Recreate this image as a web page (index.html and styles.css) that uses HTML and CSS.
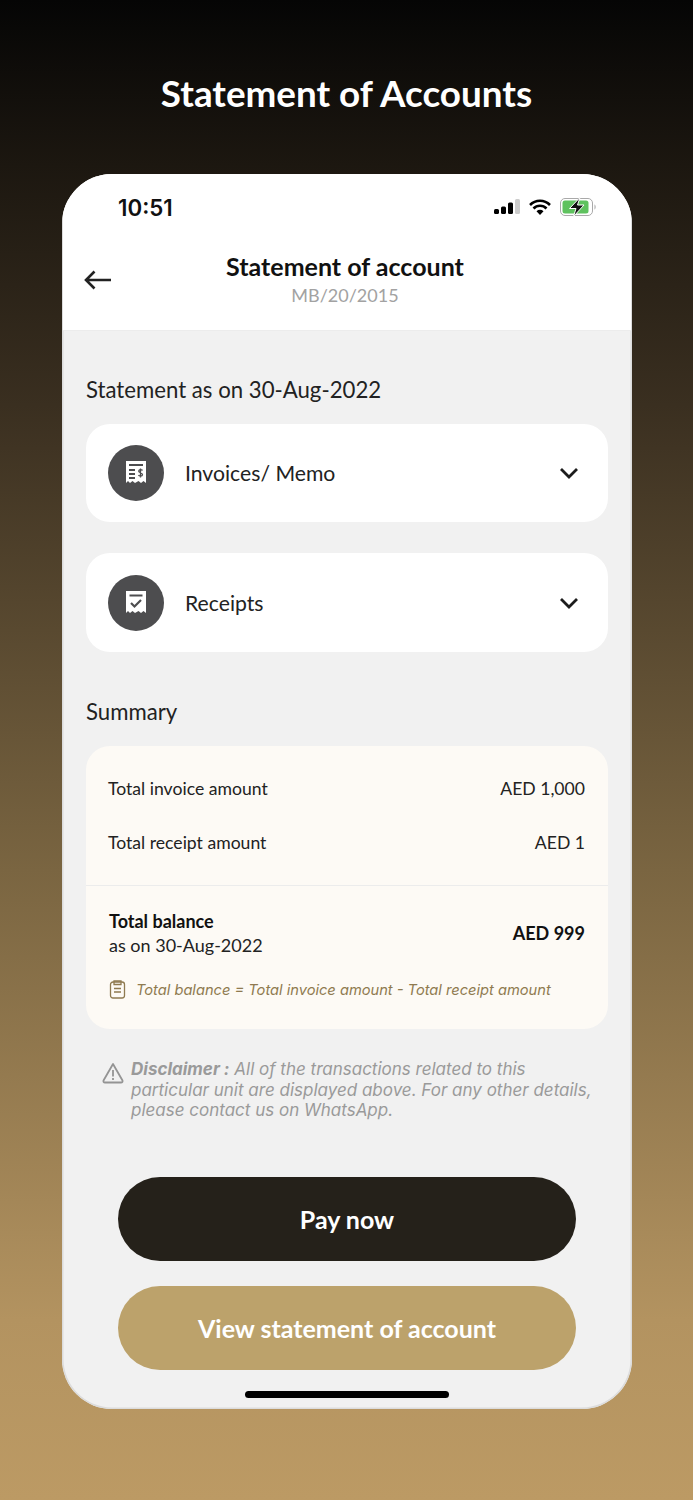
FILE: index.html
```html
<!DOCTYPE html>
<html>
<head>
    <meta charset="UTF-8">
    <meta name="viewport" content="width=device-width, initial-scale=1.0">
    <title>Statement of Accounts</title>
    <link rel="stylesheet" href="styles.css">
</head>
<body>
    <h1 class="page-title">Statement of Accounts</h1>

    <div class="phone">
        <div class="top">
            <div class="status-bar">
                <span class="time">10:51</span>
                <div class="status-icons">
                    <svg width="26" height="16" viewBox="0 0 26 16">
                        <rect x="0" y="10" width="5" height="5" rx="1.5" fill="#000"/>
                        <rect x="7" y="7.5" width="5" height="7.5" rx="1.5" fill="#000"/>
                        <rect x="14" y="3.5" width="5" height="11.5" rx="1.5" fill="#000"/>
                        <rect x="21" y="0" width="5" height="15" rx="1.5" fill="#ccc"/>
                    </svg>
                    <svg width="24" height="17" viewBox="0 0 24 17">
                        <path d="M2 6a14 14 0 0 1 20 0M5.500 9.500a9 9 0 0 1 13 0" fill="none" stroke="#000" stroke-width="2.600"/>
                        <path d="M8.500 12.300a5 5 0 0 1 7 0L12 16z" fill="#000"/>
                    </svg>
                    <svg width="37" height="20" viewBox="0 0 37 20">
                        <rect x="0.500" y="1.500" width="32" height="17" rx="4.500" fill="none" stroke="#a9a9a9"/>
                        <rect x="2.500" y="3.500" width="26" height="13" rx="2.500" fill="#5fc25f"/>
                        <path d="M34.500 7.500c1.500.5 1.500 4.500 0 5z" fill="#a9a9a9"/>
                        <path d="M20 0.500 9.500 11.500h6.500l-2.500 8 10.500-11.500h-6.500z" fill="#111" stroke="#fff" stroke-width="1"/>
                    </svg>
                </div>
            </div>
            <div class="nav">
                <svg class="back" width="28" height="20" viewBox="0 0 28 20">
                    <path d="M27 10H2M10.500 1.500 2 10l8.500 8.500" fill="none" stroke="#222" stroke-width="2.600"/>
                </svg>
                <div class="nav-title">Statement of account</div>
                <div class="nav-sub">MB/20/2015</div>
            </div>
        </div>

        <div class="content">
            <h2 class="section">Statement as on 30-Aug-2022</h2>

            <div class="row-card">
                <div class="circle">
                    <svg width="22" height="26" viewBox="0 0 22 24">
                        <path d="M1 0h20v22l-2.500-2-2.500 2-2.500-2-3.500 2-2.500-2-2.500 2L3 20l-2 2z" fill="#fff"/>
                        <path d="M4 4h14" stroke="#4d4d4f" stroke-width="2"/>
                        <path d="M4 9h6M4 13h6M4 17h6" stroke="#4d4d4f" stroke-width="1.800"/>
                        <path d="M17.500 9.500c-.5-1-3.500-1.300-3.800.5-.3 2 4 1.500 3.800 3.700-.2 1.800-3.500 1.500-4 .3M15.500 7.500v9" fill="none" stroke="#4d4d4f" stroke-width="1.300"/>
                    </svg>
                </div>
                <span class="row-label">Invoices/ Memo</span>
                <svg width="20" height="12" viewBox="0 0 20 12">
                    <path d="M2 2l8 8 8-8" fill="none" stroke="#1c1c1c" stroke-width="2.800"/>
                </svg>
            </div>

            <div class="row-card">
                <div class="circle">
                    <svg width="22" height="26" viewBox="0 0 22 24">
                        <path d="M1 0h20v22l-2.500-2-2.500 2-2.500-2-3.500 2-2.500-2-2.500 2L3 20l-2 2z" fill="#fff"/>
                        <path d="M4.500 4.500h13" stroke="#4d4d4f" stroke-width="2"/>
                        <path d="M6 12l3.500 3.500L16 9" fill="none" stroke="#4d4d4f" stroke-width="2.200"/>
                    </svg>
                </div>
                <span class="row-label">Receipts</span>
                <svg width="20" height="12" viewBox="0 0 20 12">
                    <path d="M2 2l8 8 8-8" fill="none" stroke="#1c1c1c" stroke-width="2.800"/>
                </svg>
            </div>

            <h2 class="section">Summary</h2>

            <div class="summary">
                <div class="summary-top">
                    <div class="line"><span>Total invoice amount</span><span>AED 1,000</span></div>
                    <div class="line"><span>Total receipt amount</span><span>AED 1</span></div>
                </div>
                <div class="summary-bottom">
                    <div class="balance">
                        <div><b>Total balance</b><br>as on 30-Aug-2022</div>
                        <b>AED 999</b>
                    </div>
                    <div class="formula">
                        <svg width="17" height="19" viewBox="0 0 17 19">
                            <rect x="1.500" y="2" width="14" height="16" rx="2.500" fill="none" stroke="#8f7a50" stroke-width="1.300"/>
                            <path d="M5 1h7v3.500H5zM5 8.500h7M5 12h7" fill="none" stroke="#8f7a50" stroke-width="1.300"/>
                        </svg>
                        <span>Total balance = Total invoice amount - Total receipt amount</span>
                    </div>
                </div>
            </div>

            <div class="disclaimer">
                <svg width="22" height="22" viewBox="0 0 22 22">
                    <path d="M11 2 1.500 18.500q-.5 2 1.500 2h16q2 0 1.500-2z" fill="none" stroke="#949494" stroke-width="1.800" stroke-linejoin="round"/>
                    <path d="M11 8v6.500M11 16v2" stroke="#949494" stroke-width="1.800"/>
                </svg>
                <p><b>Disclaimer :</b> All of the transactions related to this particular unit are displayed above. For any other details, please contact us on WhatsApp.</p>
            </div>

            <div class="buttons">
                <button class="btn btn-dark">Pay now</button>
                <button class="btn btn-gold">View statement of account</button>
            </div>
            <div class="home-bar"></div>
        </div>
    </div>
</body>
</html>
```

FILE: styles.css
```css
body {
    margin: 0;
    height: 1500px;
    overflow: hidden;
    background: linear-gradient(180deg, #050505 0%, #1c1710 11%, #3a2f20 27%, #7a6541 58%, #b39360 88%, #bc9a64 100%);
    font-family: Lato, sans-serif;
    color: #1c1c1c;
}

.page-title {
    margin: 0;
    padding-top: 72px;
    height: 174px;
    box-sizing: border-box;
    text-align: center;
    color: #fff;
    font-size: 36.800px;
    line-height: 43px;
    font-weight: 700;
}

.phone {
    width: 570px;
    height: 1235px;
    margin-left: 62px;
    border-radius: 50px;
    overflow: hidden;
    background: #f1f1f1;
    box-shadow: inset 0 0 0 1.500px #dcdcdc;
}

.top {
    height: 157px;
    background: #fff;
    border-bottom: 1px solid #ececec;
    box-sizing: border-box;
    margin: 0 1px;
}

.status-bar {
    display: flex;
    justify-content: space-between;
    align-items: center;
    height: 30px;
    padding: 18px 34px 0 55px;
}

.time {
    font-family: Inter, sans-serif;
    font-size: 22.300px;
    font-weight: 600;
    color: #111;
}

.status-icons {
    display: flex;
    align-items: center;
    gap: 8px;
}

.nav {
    position: relative;
    text-align: center;
    padding-top: 29px;
    padding-right: 4px;
}

.back {
    position: absolute;
    left: 21px;
    top: 48px;
}

.nav-title {
    font-size: 25px;
    line-height: 30px;
    font-weight: 700;
    color: #111;
}

.nav-sub {
    font-size: 18px;
    line-height: 29px;
    color: #a2a2a2;
}

.content {
    padding: 0 24px;
}

.section {
    margin: 0;
    padding-top: 45px;
    font-size: 22.200px;
    line-height: 30px;
    font-weight: 400;
    color: #222;
}

.section:first-child {
    padding-top: 44px;
}

.row-card {
    display: flex;
    align-items: center;
    height: 98px;
    margin-top: 19px;
    padding: 0 29px 0 22px;
    background: #fff;
    border-radius: 24px;
}

.row-card + .row-card {
    height: 99px;
    margin-top: 31px;
}

.circle {
    display: flex;
    align-items: center;
    justify-content: center;
    width: 56px;
    height: 56px;
    border-radius: 50%;
    background: #4d4d4f;
}

.row-label {
    flex: 1;
    margin-left: 21px;
    font-size: 21.200px;
    color: #222;
}

.summary {
    margin-top: 19px;
    height: 283px;
    background: #fdfaf5;
    border-radius: 24px;
}

.summary-top {
    height: 140px;
    padding: 16px 23px 0 22px;
    box-sizing: border-box;
    border-bottom: 1px solid #ececec;
}

.line {
    display: flex;
    justify-content: space-between;
    height: 54px;
    line-height: 54px;
    font-size: 17.600px;
    color: #222;
}

.summary-bottom {
    padding: 23px 23px 0 23px;
}

.balance {
    display: flex;
    justify-content: space-between;
    align-items: center;
    font-size: 18px;
    line-height: 24px;
    color: #222;
}

.balance b {
    color: #111;
}

.formula {
    display: flex;
    align-items: center;
    gap: 10px;
    margin-top: 23px;
    font-family: Inter, sans-serif;
    font-style: italic;
    font-size: 14.650px;
    color: #8f7a50;
}

.disclaimer {
    display: flex;
    align-items: flex-start;
    gap: 7px;
    padding: 30px 8px 0 16px;
}

.disclaimer svg {
    flex: none;
    margin-top: 3px;
}

.disclaimer p {
    margin: 0;
    font-family: Inter, sans-serif;
    font-style: italic;
    font-size: 17px;
    line-height: 20.500px;
    color: #9a9a9a;
}

.buttons {
    display: flex;
    flex-direction: column;
    align-items: center;
    gap: 25px;
    margin-top: 56px;
}

.btn {
    width: 458px;
    height: 84px;
    border: none;
    border-radius: 42px;
    color: #fff;
    font-family: Lato, sans-serif;
    font-size: 25px;
    font-weight: 700;
}

.btn-dark {
    background: #25211a;
}

.btn-gold {
    background: #bca26b;
}

.home-bar {
    width: 204px;
    height: 7px;
    margin: 21px auto 0;
    border-radius: 4px;
    background: #000;
}
```
